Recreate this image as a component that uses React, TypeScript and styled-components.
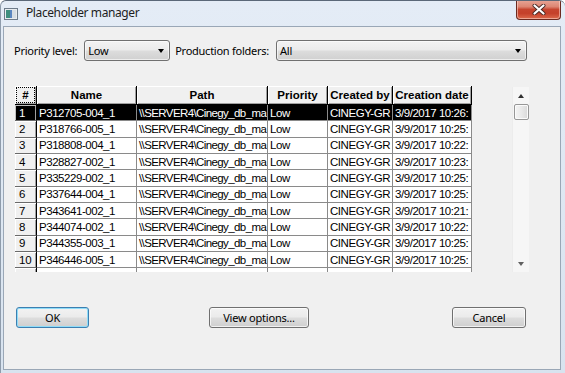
import React from "react";
import styled, { createGlobalStyle } from "styled-components";

const Global = createGlobalStyle`
  html, body { margin: 0; padding: 0; background: #ffffff; }
  body { width: 565px; height: 373px; overflow: hidden; }
  * { box-sizing: border-box; }
`;

const UI = `"Noto Sans", "Open Sans", sans-serif`;
const GRIDFONT = `"Liberation Sans", Arial, sans-serif`;

const Window = styled.div`
  width: 565px;
  height: 373px;
  display: flex;
  flex-direction: column;
  background: linear-gradient(180deg, #e4ecf6 0%, #d8e3ef 100%);
  border-top: 1px solid #5b6878;
  border-left: 1px solid #8f9cab;
  border-radius: 6px 6px 0 0;
  overflow: hidden;
`;

const TitleBar = styled.div`
  height: 25px;
  display: flex;
  align-items: flex-start;
  padding-left: 3px;
  position: relative;
`;

const TitleIcon = styled.svg`
  margin-top: 7px;
  width: 14px;
  height: 12px;
  flex: none;
`;

const TitleText = styled.div`
  margin-left: 8px;
  margin-top: 4px;
  font-family: ${UI};
  font-size: 12px;
  letter-spacing: -0.4px;
  color: #1e1e1e;
  line-height: 16px;
`;

const CloseButton = styled.div`
  position: absolute;
  top: -1px;
  right: 4px;
  width: 45px;
  height: 20px;
  border: 1px solid #6b2a20;
  border-top: none;
  border-radius: 0 0 4px 4px;
  background: linear-gradient(180deg, #e8a697 0%, #dd8673 35%, #c6452f 50%, #c4402a 70%, #dc6a4c 100%);
  box-shadow: inset 0 0 0 1px rgba(255, 220, 210, 0.55);
  display: flex;
  align-items: center;
  justify-content: center;
`;

const FrameBody = styled.div`
  flex: 1;
  display: flex;
  padding: 0 4px 3px 2px;
`;

const Client = styled.div`
  flex: 1;
  border: 1px solid #9aa7b6;
  background: #f0f0f0;
  display: flex;
  flex-direction: column;
`;

const Toolbar = styled.div`
  display: flex;
  align-items: center;
  margin-top: 13px;
  padding: 0 33px 0 10px;
  height: 21px;
`;

const Label = styled.span`
  font-family: ${UI};
  font-size: 11px;
  letter-spacing: -0.25px;
  color: #000;
  white-space: nowrap;
`;

const Combo = styled.div<{ $w?: number; $grow?: boolean }>`
  height: 21px;
  width: ${(p) => (p.$w ? `${p.$w}px` : "auto")};
  flex: ${(p) => (p.$grow ? "1" : "none")};
  margin: 0 5px 0 7px;
  border: 1px solid #707070;
  border-radius: 3px;
  background: linear-gradient(180deg, #f3f3f3 0%, #ebebeb 48%, #dddddd 52%, #d0d0d0 100%);
  box-shadow: inset 0 0 0 1px rgba(255, 255, 255, 0.6);
  display: flex;
  align-items: center;
  padding: 0 5px 0 3px;
  font-family: ${UI};
  font-size: 11px;
  letter-spacing: -0.2px;
  color: #000;
  &:last-child { margin-right: 0; }
`;

const ComboText = styled.span`
  flex: 1;
`;

const Arrow = styled.span`
  width: 0;
  height: 0;
  border-left: 3.5px solid transparent;
  border-right: 3.5px solid transparent;
  border-top: 4px solid #000;
`;

const GridArea = styled.div`
  margin-top: 25px;
  margin-left: 11px;
  margin-right: 31px;
  height: 186px;
  display: flex;
  justify-content: space-between;
`;

const Table = styled.div`
  width: 457px;
  height: 186px;
  overflow: hidden;
  display: grid;
  grid-template-columns: 22px 100px 131px 60px 65px 79px;
  grid-template-rows: 19px;
  grid-auto-rows: 16.33px;
  font-family: ${GRIDFONT};
  font-size: 11.5px;
  align-content: start;
`;

const HeadCell = styled.div<{ $focus?: boolean }>`
  background: #f0f0f0;
  border-right: 1px solid #000;
  border-bottom: 1px solid #000;
  box-shadow: inset 1px 1px 0 #ffffff, inset -1px -1px 0 #a0a0a0;
  font-weight: bold;
  font-size: 11.5px;
  color: #000;
  display: flex;
  align-items: center;
  justify-content: center;
  white-space: nowrap;
  overflow: hidden;
  position: relative;
  ${(p) =>
    p.$focus
      ? `&::after { content: ""; position: absolute; inset: 1px 1px 1px 1px; border: 1px dotted #000; }`
      : ""}
`;

const RowHead = styled.div<{ $sel?: boolean }>`
  background: ${(p) => (p.$sel ? "#000" : "#f0f0f0")};
  color: ${(p) => (p.$sel ? "#fff" : "#000")};
  border-right: 1px solid #000;
  border-bottom: 1px solid #6a6a6a;
  box-shadow: inset 1px 1px 0 ${(p) => (p.$sel ? "#c0c0c0" : "#ffffff")}, inset -1px 0 0 #a0a0a0;
  padding-left: 4px;
  display: flex;
  align-items: center;
  letter-spacing: -0.2px;
  white-space: nowrap;
  overflow: hidden;
`;

const Cell = styled.div<{ $sel?: boolean; $tight?: boolean }>`
  background: ${(p) => (p.$sel ? "#000" : "#fff")};
  color: ${(p) => (p.$sel ? "#fff" : "#000")};
  border-right: 1px solid #8a8a8a;
  border-bottom: 1px solid #8a8a8a;
  padding-left: 2px;
  display: flex;
  align-items: center;
  white-space: nowrap;
  overflow: hidden;
  letter-spacing: ${(p) => (p.$tight ? "-0.6px" : "-0.45px")};
`;

const ScrollBar = styled.div`
  width: 17px;
  margin-top: 1px;
  height: 185px;
  background: #f6f6f6;
  border-left: 1px solid #ececec;
  display: flex;
  flex-direction: column;
  align-items: center;
`;

const ScrollArrow = styled.div<{ $down?: boolean }>`
  height: 17px;
  width: 100%;
  display: flex;
  align-items: center;
  justify-content: center;
  &::before {
    content: "";
    width: 0;
    height: 0;
    border-left: 3.5px solid transparent;
    border-right: 3.5px solid transparent;
    ${(p) => (p.$down ? "border-top: 4px solid #606060;" : "border-bottom: 4px solid #303030;")}
  }
`;

const Thumb = styled.div`
  width: 15px;
  height: 16px;
  border: 1px solid #979797;
  border-radius: 2px;
  background: linear-gradient(90deg, #f4f4f4 0%, #e9e9e9 50%, #d9d9d9 100%);
  box-shadow: inset 0 0 0 1px #fbfbfb;
`;

const Track = styled.div`
  flex: 1;
`;

const ButtonRow = styled.div`
  display: flex;
  margin-top: 35px;
  padding-left: 12px;
`;

const Button = styled.div<{ $w: number; $ml?: number; $def?: boolean }>`
  width: ${(p) => p.$w}px;
  height: 21px;
  margin-left: ${(p) => p.$ml ?? 0}px;
  border: 1px solid ${(p) => (p.$def ? "#3c7fb1" : "#707070")};
  border-radius: 3px;
  background: linear-gradient(180deg, #f2f2f2 0%, #ebebeb 48%, #dddddd 52%, #cfcfcf 100%);
  box-shadow: inset 0 0 0 1px ${(p) => (p.$def ? "#8fdcf8" : "rgba(255,255,255,0.7)")};
  display: flex;
  align-items: center;
  justify-content: center;
  font-family: ${UI};
  font-size: 11px;
  letter-spacing: -0.2px;
  color: #000;
`;

const data: [string, string][] = [
  ["P312705-004_1", "10:26:"],
  ["P318766-005_1", "10:25:"],
  ["P318808-004_1", "10:22:"],
  ["P328827-002_1", "10:23:"],
  ["P335229-002_1", "10:25:"],
  ["P337644-004_1", "10:25:"],
  ["P343641-002_1", "10:21:"],
  ["P344074-002_1", "10:22:"],
  ["P344355-003_1", "10:25:"],
  ["P346446-005_1", "10:25:"],
  ["P348247-002_1", "10:22:"],
];

const headers = ["Name", "Path", "Priority", "Created by", "Creation date"];

export default function App() {
  return (
    <>
      <Global />
      <Window>
        <TitleBar>
          <TitleIcon viewBox="0 0 14 12">
            <rect x="0.5" y="0.5" width="13" height="11" fill="#e8ecef" stroke="#6d7b89" />
            <rect x="2" y="2" width="4" height="8" fill="#3e8f7e" />
            <rect x="6" y="2" width="2" height="8" fill="#5a86c0" />
            <rect x="8" y="2" width="4" height="8" fill="#d6dde3" />
          </TitleIcon>
          <TitleText>Placeholder manager</TitleText>
          <CloseButton>
            <svg width="14" height="11" viewBox="0 0 14 11">
              <path d="M2.5 1.5 L11.5 9.5 M11.5 1.5 L2.5 9.5" stroke="#4a2a25" strokeWidth="4" strokeLinecap="round" />
              <path d="M2.5 1.5 L11.5 9.5 M11.5 1.5 L2.5 9.5" stroke="#ffffff" strokeWidth="2.2" strokeLinecap="round" />
            </svg>
          </CloseButton>
        </TitleBar>
        <FrameBody>
          <Client>
            <Toolbar>
              <Label>Priority level:</Label>
              <Combo $w={86}>
                <ComboText>Low</ComboText>
                <Arrow />
              </Combo>
              <Label>Production folders:</Label>
              <Combo $grow>
                <ComboText>All</ComboText>
                <Arrow />
              </Combo>
            </Toolbar>
            <GridArea>
              <Table>
                <HeadCell $focus>#</HeadCell>
                {headers.map((h) => (
                  <HeadCell key={h}>{h}</HeadCell>
                ))}
                {data.map(([name, time], i) => {
                  const sel = i === 0;
                  return (
                    <React.Fragment key={name}>
                      <RowHead $sel={sel}>{i + 1}</RowHead>
                      <Cell $sel={sel}>{name}</Cell>
                      <Cell $sel={sel} $tight>\\SERVER4\Cinegy_db_ma</Cell>
                      <Cell $sel={sel}>Low</Cell>
                      <Cell $sel={sel}>CINEGY-GR</Cell>
                      <Cell $sel={sel}>3/9/2017 {time}</Cell>
                    </React.Fragment>
                  );
                })}
              </Table>
              <ScrollBar>
                <ScrollArrow />
                <Thumb />
                <Track />
                <ScrollArrow $down />
              </ScrollBar>
            </GridArea>
            <ButtonRow>
              <Button $w={73} $def>OK</Button>
              <Button $w={100} $ml={120}>View options...</Button>
              <Button $w={74} $ml={143}>Cancel</Button>
            </ButtonRow>
          </Client>
        </FrameBody>
      </Window>
    </>
  );
}
